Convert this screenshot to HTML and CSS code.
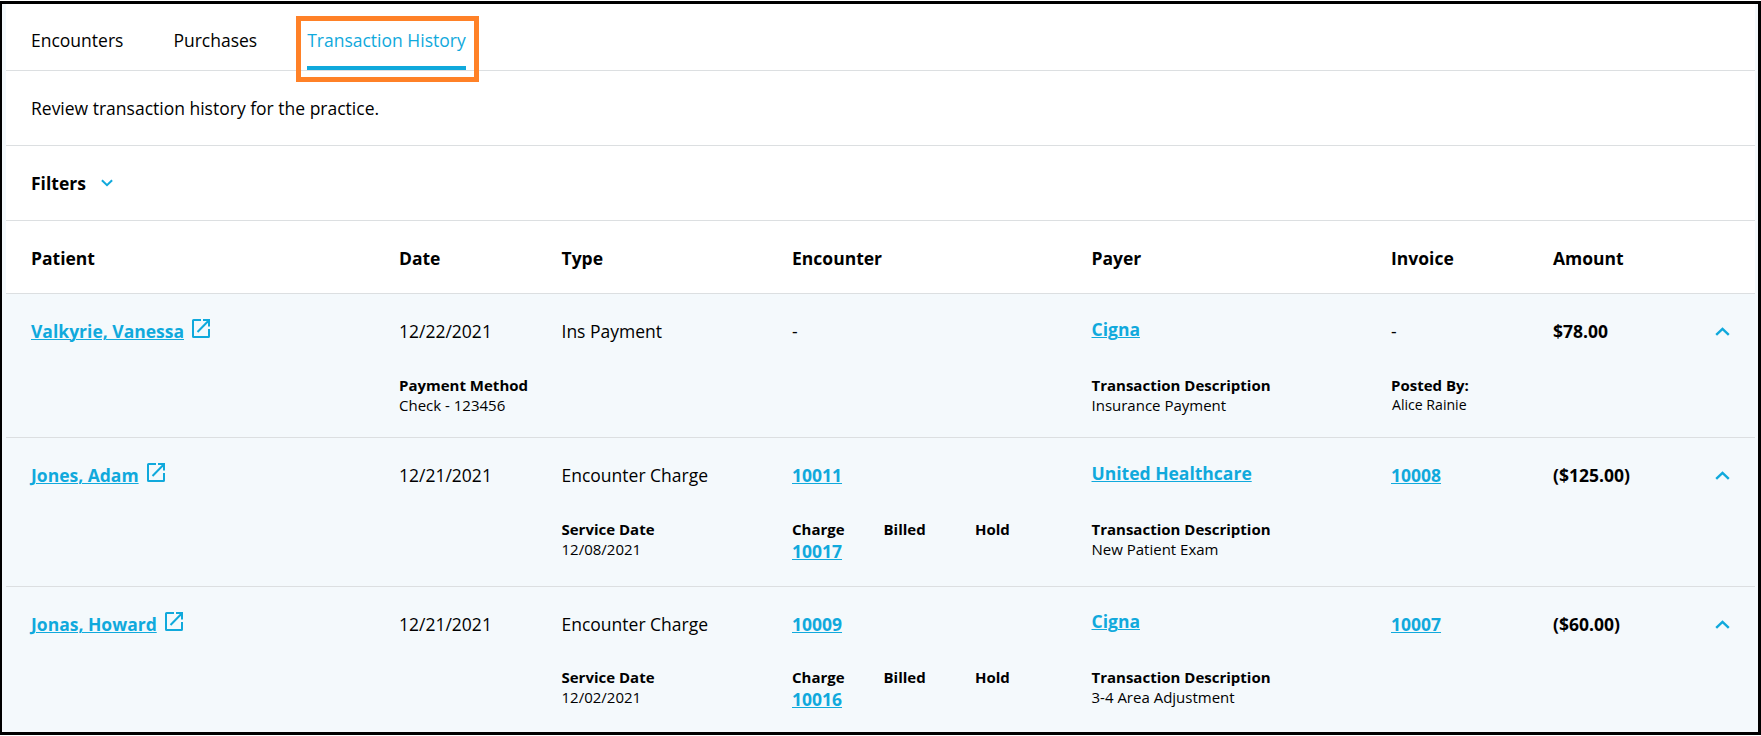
FILE: index.html
```html
<!DOCTYPE html>
<html lang="en">
<head>
<meta charset="utf-8">
<title>Transaction History</title>
<link rel="stylesheet" href="styles.css">
</head>
<body>
<svg class="sprite" aria-hidden="true">
  <symbol id="open" viewBox="0 0 18 19"><path d="M9 1H1.600Q1 1 1 1.600V17.400Q1 18 1.600 18H16.400Q17 18 17 17.400V10M11 1H17V7.500M17 1.200L5.500 13" fill="none" stroke="currentColor" stroke-width="2"/></symbol>
  <symbol id="up" viewBox="0 0 15 9"><path d="M1.200 7.900L7.500 1.800L13.800 7.900" fill="none" stroke="currentColor" stroke-width="2.400"/></symbol>
  <symbol id="down" viewBox="0 0 12 8"><path d="M0.900 1.200L6 6.200L11.100 1.200" fill="none" stroke="currentColor" stroke-width="2"/></symbol>
</svg>
<main class="page">
  <nav class="tabs">
    <a class="tab">Encounters</a>
    <a class="tab">Purchases</a>
    <a class="tab active">Transaction History</a>
  </nav>
  <p class="bar intro">Review transaction history for the practice.</p>
  <div class="bar filters">Filters <svg class="down"><use href="#down"/></svg></div>
  <section class="table">
    <div class="grid head">
      <span>Patient</span><span>Date</span><span>Type</span><span>Encounter</span><span>Payer</span><span>Invoice</span><span>Amount</span>
    </div>
    <article class="row">
      <div class="grid main">
        <span class="patient"><a class="link">Valkyrie, Vanessa</a><svg class="open"><use href="#open"/></svg></span>
        <span>12/22/2021</span><span>Ins Payment</span><span>-</span>
        <span class="payer"><a class="link">Cigna</a></span><span>-</span>
        <span class="amount">$78.00</span><svg class="up"><use href="#up"/></svg>
      </div>
      <div class="grid detail">
        <div class="c-date"><b>Payment Method</b><p>Check - 123456</p></div>
        <div class="c-payer"><b>Transaction Description</b><p>Insurance Payment</p></div>
        <div class="c-invoice"><b>Posted By:</b><p class="poster">Alice Rainie</p></div>
      </div>
    </article>
    <article class="row tall">
      <div class="grid main">
        <span class="patient"><a class="link">Jones, Adam</a><svg class="open"><use href="#open"/></svg></span>
        <span>12/21/2021</span><span>Encounter Charge</span><span><a class="link">10011</a></span>
        <span class="payer"><a class="link">United Healthcare</a></span><span><a class="link">10008</a></span>
        <span class="amount">($125.00)</span><svg class="up"><use href="#up"/></svg>
      </div>
      <div class="grid detail">
        <div class="c-type"><b>Service Date</b><p>12/08/2021</p></div>
        <div class="c-encounter charges"><div><b>Charge</b><a class="link">10017</a></div><b>Billed</b><b>Hold</b></div>
        <div class="c-payer"><b>Transaction Description</b><p>New Patient Exam</p></div>
      </div>
    </article>
    <article class="row">
      <div class="grid main">
        <span class="patient"><a class="link">Jonas, Howard</a><svg class="open"><use href="#open"/></svg></span>
        <span>12/21/2021</span><span>Encounter Charge</span><span><a class="link">10009</a></span>
        <span class="payer"><a class="link">Cigna</a></span><span><a class="link">10007</a></span>
        <span class="amount">($60.00)</span><svg class="up"><use href="#up"/></svg>
      </div>
      <div class="grid detail">
        <div class="c-type"><b>Service Date</b><p>12/02/2021</p></div>
        <div class="c-encounter charges"><div><b>Charge</b><a class="link">10016</a></div><b>Billed</b><b>Hold</b></div>
        <div class="c-payer"><b>Transaction Description</b><p>3-4 Area Adjustment</p></div>
      </div>
    </article>
  </section>
</main>
</body>
</html>
```
FILE: styles.css
```css
* { box-sizing: border-box; }
body {
  margin: 0;
  padding-top: 1px;
  height: 736px;
  overflow: hidden;
  background: #fff;
  color: #000;
  font: 17.5px/24px "Open Sans", "Noto Sans", sans-serif;
}
p { margin: 0; }
.sprite { display: none; }
.page {
  height: 734px;
  border: solid #000;
  border-width: 3px 3px 3px 2px;
  padding: 0 3px 0 4px;
  background: #f4f9fc;
  overflow: hidden;
}
.tabs {
  display: flex;
  align-items: flex-start;
  gap: 50px;
  height: 67px;
  padding: 24px 25px 0;
  background: #fff;
  border-bottom: 1px solid #dcdfe1;
}
.tab { height: 42px; }
.tab.active {
  position: relative;
  color: #10a9dc;
  border-bottom: 4px solid #10a9dc;
}
.tab.active::after {
  content: "";
  position: absolute;
  inset: -12px -13px -16px -11px;
  border: 5px solid #ff8127;
}
.bar {
  display: flex;
  align-items: center;
  height: 75px;
  padding: 0 25px;
  background: #fff;
  border-bottom: 1px solid #dcdfe1;
}
.filters { gap: 15px; font-weight: 700; }
.down { width: 12px; height: 8px; color: #10a9dc; }
.grid {
  display: grid;
  grid-template-columns: 368px 162.5px 230.5px 299.5px 299.5px 162px 1fr;
  padding-left: 25px;
}
.head {
  height: 73px;
  padding-top: 1px;
  align-items: center;
  background: #fff;
  border-bottom: 1px solid #dcdfe1;
  font-weight: 700;
}
.row { height: 144px; border-bottom: 1px solid #dcdfe1; padding-top: 25px; }
.row.tall { height: 149px; }
.row:last-child { border: 0; }
.main {
  grid-template-columns: 368px 162.5px 230.5px 299.5px 299.5px 162px 1fr auto;
  padding-right: 25px;
  height: 24px;
}
.link, .amount { font-weight: 700; }
.link {
  color: #10a9dc;
  text-decoration: underline;
  text-decoration-thickness: 1px;
  text-underline-offset: 1px;
}
.patient { display: flex; align-items: flex-start; gap: 8px; }
.payer { margin-top: -2px; }
.row:last-child .payer { margin-top: -3px; }
.open { width: 18px; height: 19px; color: #10a9dc; }
.up { width: 15px; height: 9px; margin-top: 8px; color: #10a9dc; }
.detail { padding-top: 32px; font-size: 15px; line-height: 20px; }
.row:last-child .detail { padding-top: 31px; }
.detail b { display: block; font-weight: 700; }
.c-date { grid-column: 2; }
.c-type { grid-column: 3; }
.c-encounter { grid-column: 4; }
.c-payer { grid-column: 5; }
.c-invoice { grid-column: 6; }
.charges { display: grid; grid-template-columns: 91.5px 91.5px auto; }
.charges .link { display: block; font-size: 17.5px; line-height: 24px; }
.poster { padding-left: 1px; font-size: 14.100px; line-height: 19px; }
```
